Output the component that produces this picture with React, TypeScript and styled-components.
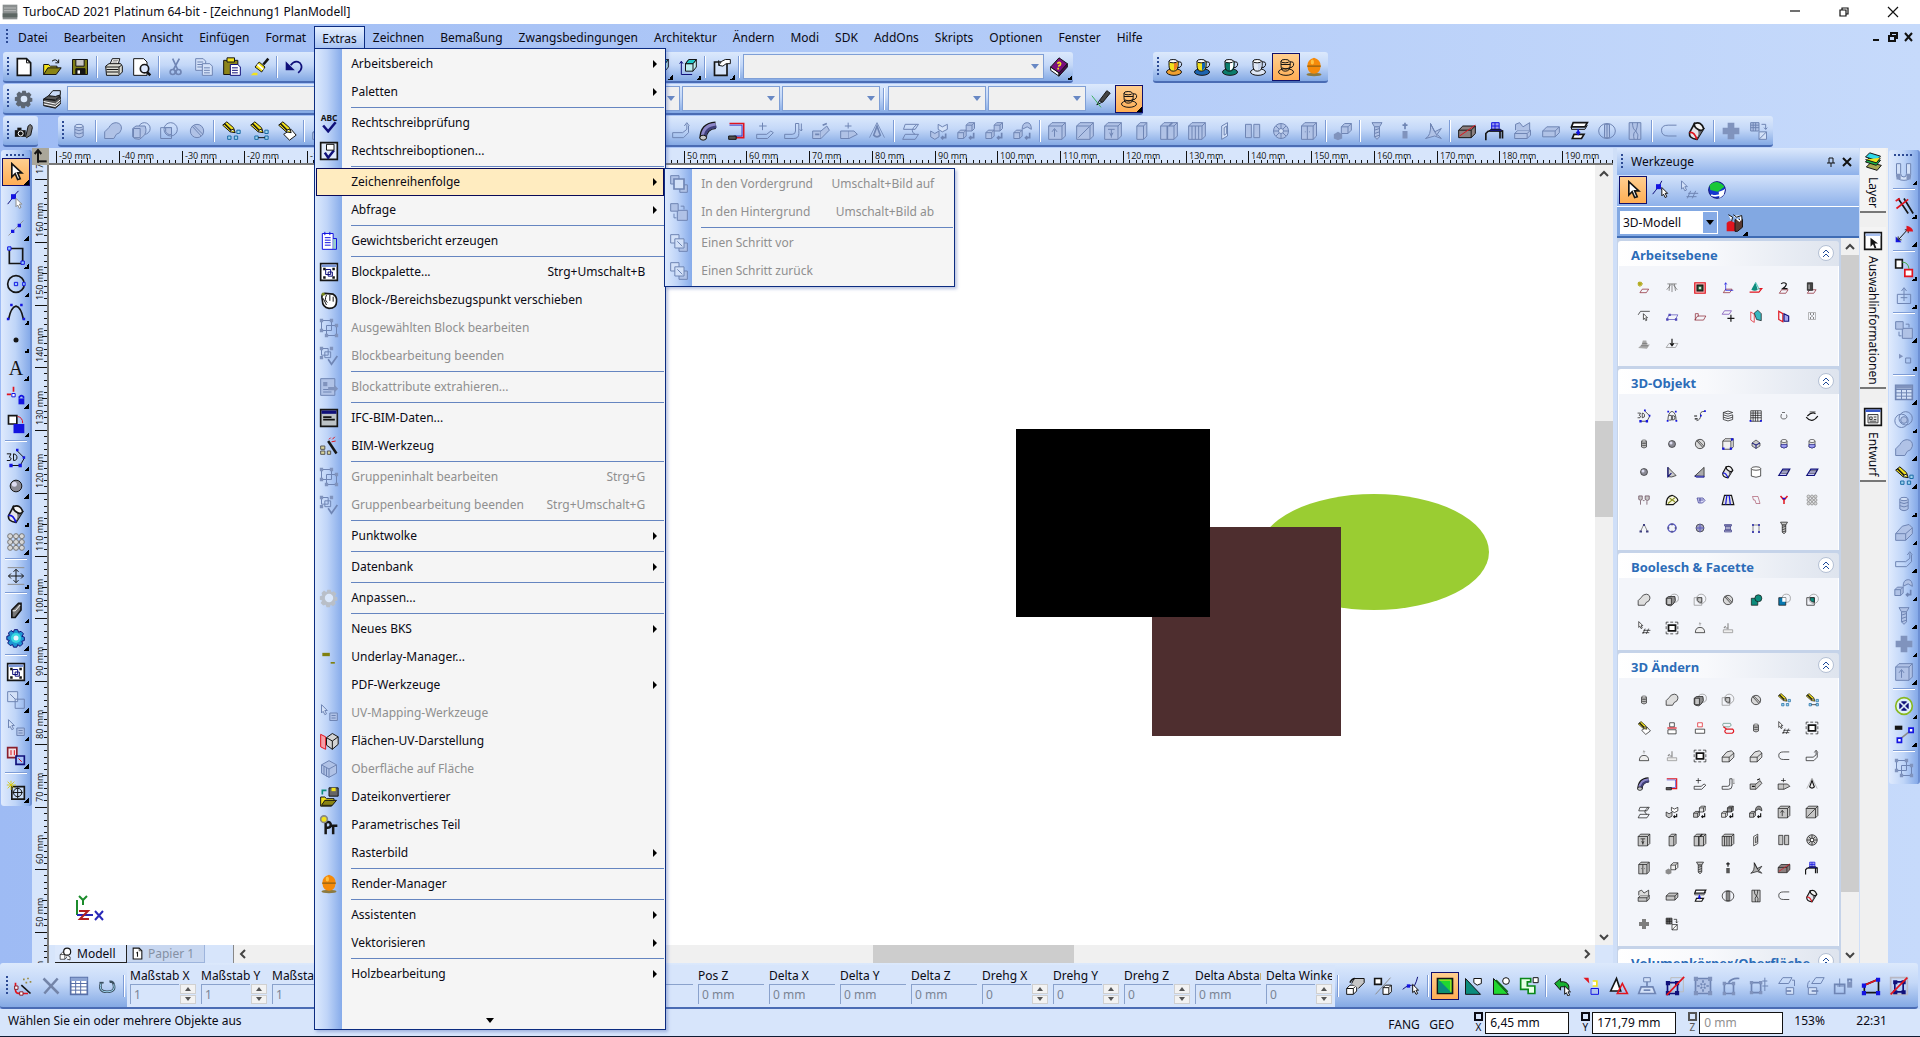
import React from 'react';
import styled, { createGlobalStyle, css } from 'styled-components';

/* ---------- icon drawings (24 x 24 grid) ---------- */

type Shape = [d: string, stroke?: string, fill?: string, width?: number];

const K = '#151515';
const G = '#c6c6c6';
const D = '#8c8c8c';
const W = '#ffffff';
const B = '#1414e0';
const N = '#10107a';
const R = '#e0141e';
const Y = '#f2e21c';
const T = '#0c8c7c';
const M = '#8a1f2c';

const c = (x: number, y: number, r: number) =>
  `M${x - r} ${y}a${r} ${r} 0 1 0 ${2 * r} 0a${r} ${r} 0 1 0 ${-2 * r} 0z`;
const e = (x: number, y: number, rx: number, ry: number) =>
  `M${x - rx} ${y}a${rx} ${ry} 0 1 0 ${2 * rx} 0a${rx} ${ry} 0 1 0 ${-2 * rx} 0z`;
const r = (x: number, y: number, w: number, h: number) => `M${x} ${y}h${w}v${h}h${-w}z`;
const box = (x: number, y: number, w: number, h: number, d: number, fill = G): Shape[] => [
  [`M${x} ${y + d}l${d} ${-d}h${w - d}v${h - d}l${-d} ${d}h${-(w - d)}z`, K, fill],
  [`M${x} ${y + d}h${w - d}v${h - d}M${x + w - d} ${y + d}l${d} ${-d}`, K],
];
const plane = (x: number, y: number, s = M): Shape => [`M${x} ${y}l4 -6h11l-4 6z`, s];

const pencil: Shape[] = [
  ['M2 5l5 -4l8 7l2 6l-6 -1z', K, Y],
  ['M4 3l9 9', K, '', 2],
  ['M11 13l2 -3l3 1', K, W],
];
const group = (s = K, f = ''): Shape[] => [
  [r(3, 3, 12, 12), s, f],
  [r(9, 9, 12, 12), s],
  [r(1, 1, 4, 4) + r(13, 1, 4, 4) + r(1, 13, 4, 4) + r(19, 7, 4, 4) + r(7, 19, 4, 4) + r(19, 19, 4, 4), '', s],
];
const cup = (a: string, b: string, saucer: string): Shape[] => [
  [e(12, 18, 9, 4), K, saucer],
  ['M6 5v5q0 7 5 7q6 0 6 -7V5z', K, a],
  ['M12 5h4v5q0 5 -4 6z', '', b],
  ['M17 6q5 -1 4 4q-1 3 -5 3', K],
  [e(11, 5, 5, 2), K, W],
];
const tilted = (band: string): Shape[] => [
  ['M9 3L3 14q-1 7 9 8l8 -13z', K, '#e4e4ea', 2],
  ['M20 9l-8 13q3 -7 1 -11z', '', '#6c6c74'],
  ['M9 3q8 -3 11 6q-2 4 -7 1q-5 -3 -4 -7z', K, '#f4f4f4', 2],
  ['M3 14q5 -2 9 8', band, '', 2],
];
const arrowHead: Shape = ['M7 2v16l4 -4l3 7l3 -1l-3 -7h5z', K, W, 2];
const smallArrow = (x: number, y: number, s = K): Shape => [`M${x} ${y}v10l2 -2l2 4l2 -1l-2 -4h3z`, s, W];
const gearPath =
  'M10 2h4l1 3l3 -1l3 3l-2 3l3 1v4l-3 1l1 3l-3 3l-3 -2l-1 3h-4l-1 -3l-3 1l-3 -3l2 -3l-3 -1v-4l3 -1l-1 -3l3 -3l3 2z';

const icons: Record<string, Shape[]> = {
  app: [[r(1, 1, 22, 22), '', '#8a8f8f'], [r(1, 14, 22, 6), '', '#5c6663'], ['M3 6h18M3 10h18', '#c4c4c4']],
  new: [['M4 2h11l5 5v15H4z', K, W, 2], ['M15 2v5h5', K]],
  open: [
    ['M2 9h6l2 2h8v3l-4 7H2z', K, Y],
    ['M2 21l5 -8h16l-6 8z', K, '#8a8414'],
    ['M12 5q5 -4 8 2M20 3v4h-4', K],
  ],
  save: [[r(3, 3, 18, 18), K, '#7d7d16'], [r(7, 3, 10, 8), K, G], [r(7, 14, 11, 7), K, K], [r(9, 16, 3, 4), '', W]],
  print: [
    ['M7 9l3 -7h9l-2 7z', K, W],
    ['M2 11l4 -3h14l2 3v7l-4 4H3z', K, '#dcdcd4'],
    ['M2 12h16l3 -2M18 12v9M3 15h14M3 18h14', K],
    ['M11 4h6M10 6h6', D],
  ],
  preview: [['M2 2h12l4 4v16H2z', K, W], [c(15, 14, 5), K, '#dfeaff', 2], ['M18 18l4 4', K, '', 3]],
  cut: [['M8 2l6 13M16 2L9 15', K, '', 2], [c(8, 18, 3) + c(15, 18, 3), K, '', 2]],
  copy: [
    ['M2 2h9l3 3v11H2z', K, W],
    ['M4 6h7M4 9h7M4 12h7', K],
    ['M10 8h9l3 3v11H10z', K, W],
    ['M12 13h7M12 16h7M12 19h7', K],
  ],
  paste: [
    [r(2, 4, 17, 17), K, '#8c8419'],
    [r(6, 1, 9, 5), K, Y],
    ['M10 9h9l3 3v10H10z', N, W],
    ['M12 13h7M12 16h7M12 19h7', N],
  ],
  brush: [
    ['M22 2l-6 7', K, '#8a5a2a', 3],
    ['M11 6l7 6l-4 6l-8 -6z', K, Y],
    ['M9 9l7 6', W, '', 2],
    ['M1 22h8v-3H4z', '', Y],
  ],
  undo: [['M2 5v11h11z', '', N], ['M8 10q5 -7 11 -3q5 6 -2 12', N, '', 2]],
  redo: [['M21 5v11h-11z', '', N], ['M17 11q-6 -8 -12 -3q-4 6 3 12', N, '', 2]],
  axesbox: [
    ['M9 8l4 -5h9v9l-4 5H9z', K, '#bfeef0'],
    ['M9 8h9v9M18 8l4 -5', K],
    ['M9 8l4 -5h9l-4 5z', K, '#22c8c8'],
    ['M4 6v15h13M2 8l2 -3l2 3', N],
  ],
  props: [['M3 6h15v16H3z', K, '#d6e4fa', 2], ['M8 10q3 -6 8 -7h6v5h-5l-4 3z', K, W], ['M8 4v6', K]],
  book: [
    ['M2 12v4l10 7v-4z', K, W],
    ['M12 19v4l10 -11V8z', K, '#4c064e'],
    ['M2 12L12 1l10 7l-10 11z', K, '#7a0e7e'],
    ['M10 8q3 -3 4 0q0 2 -3 3M11 13v2', Y, '', 2],
  ],
  cupYellow: cup(Y, '#f08020', '#f0a030'),
  cupBlue: cup(Y, '#1464b4', '#1c64b0'),
  cupGreen: cup('#0c7c6c', W, '#0c7c6c'),
  cupLine: cup('#e0e8f6', '#c8d4ea', '#dfe8f6'),
  cupActive: [
    [e(12, 18, 9, 4), K],
    ['M6 5v5q0 7 5 7q6 0 6 -7V5', K],
    ['M17 6q5 -1 4 4q-1 3 -5 3M6 9h11M7 13q5 3 9 0', K],
    [e(11, 5, 5, 2), K],
  ],
  egg: [
    [e(12, 21, 9, 2), '', '#8c7a40'],
    ['M12 1q8 2 8 10q-1 9 -8 9q-7 0 -8 -9q0 -8 8 -10z', '', '#f58a0a'],
    ['M4 11h16', '#a86a10', '', 2],
    [e(10, 6, 2, 3), '', '#ffc040'],
  ],
  gear: [[gearPath, '', '#5d6673'], [c(12, 12, 4), '', '#dbe8fb']],
  gearLight: [[gearPath, '', '#b9bfc8'], [c(12, 12, 5), '', '#dbe8fb']],
  gearCyan: [[gearPath, N, '#1e96d2'], [c(12, 12, 6), '', '#38d8e0'], [c(12, 12, 3), '', '#e6f4ff']],
  layers: [
    ['M2 12l6 -4h14l-6 5z', K, '#5a5a5a'],
    ['M2 12v8l14 3l6 -5v-9l-6 5z', K, '#5a5a5a'],
    ['M2 15l14 3l6 -5M2 18l14 3l6 -5', W],
    ['M8 8l5 -6h9v5l-6 2z', K, '#c8daf6'],
  ],
  pen: [['M10 14L19 2l4 3l-9 11z', K, '#444'], ['M10 14l-3 5l6 -3', K], ['M1 8l11 14', '#40b060']],
  camera: [
    [r(1, 11, 13, 8), '', K],
    [c(8, 15, 3), W],
    ['M14 19l3 -13q4 -4 5 2l-2 9l-5 3z', K, '#777'],
    [r(4, 8, 5, 3), '', K],
  ],
  barrel: [
    ['M7 6v12q5 4 10 0V6', K, G],
    [e(12, 6, 5, 2), K, W],
    ['M7 10q5 3 10 0M7 14q5 3 10 0', K],
  ],
  union: [['M2 13l5 -5q3 -6 9 -6q7 1 6 8q-1 5 -6 6l-3 5H2z', K, '#dedede']],
  subtract: [[c(16, 9, 7), D], ['M2 9l4 -3h11q3 8 -3 13l-4 3q-6 0 -8 -3z', K, D], [r(3, 9, 8, 11), K, G]],
  intersect: [[r(2, 8, 13, 13), D], [c(14, 10, 8), D], ['M8 8h7v8q-5 1 -7 -3z', K, G]],
  slash: [[c(12, 12, 8), K, '#d8d8d8'], ['M6 6l11 12M8 5l11 11', K]],
  pencilDots: [
    ...pencil,
    [r(8, 18, 4, 4) + r(19, 11, 4, 4) + r(16, 18, 4, 4), '#1a6aa4', '#9fd4ee'],
  ],
  pencilNodes: [...pencil, [r(7, 18, 4, 4) + r(19, 11, 4, 4) + r(19, 18, 4, 4), '#1a6aa4', '#9fd4ee'], ['M11 20h8', K]],
  pencilPlane: [['M8 16l9 -6l6 7l-8 6z', K, W], ...pencil],
  sweep: [['M2 14h12l5 -4v-6M2 14v6h13l6 -6v-8', K], ['M16 6l3 -4l3 4', K]],
  pipe: [
    ['M5 21q0 -15 15 -16', K, '', 9],
    ['M5 21q0 -15 15 -16', '#8c86c8', '', 6],
    ['M7 21q0 -13 14 -14', '#40407a', '', 3],
    [e(5, 20, 4, 3), K, G],
  ],
  ubend: [['M3 3h17v17H3', R, '', 2], ['M3 5h15v13H8', '#2828c8', '', 1], [r(2, 18, 9, 4), K, '#555']],
  plusArrow: [['M9 2v9M5 6h9', K], ['M2 16h12l5 -4l3 2l-7 7H2z', K]],
  bendPipe: [['M2 16h9q4 0 4 -4V3h4v12q0 6 -6 6H2z', K], ['M22 3v9l-2 -2M22 12l1 -2', D]],
  foldArrow: [['M2 12h10v9H2z', K, G], ['M12 12l7 -6l3 5l-10 10', K, G], ['M5 16h5M14 5l5 -2', K, '', 2]],
  foldPlus: [['M2 12h10v9H2z', K, G], ['M12 12h6l4 4l-10 5', K, G], ['M11 2v7M7 6h8', K]],
  cone: [['M12 6l-4 11q4 4 8 0z', K, '#eeeeee', 2], ['M12 2L3 20M12 2l9 18', D, '', 1]],
  sheets: [['M5 4h16l-4 6H3z', K], ['M5 16h16l-4 6H2z', K], ['M19 4q-10 8 -2 12', K]],
  flow1: [['M2 12l5 3l5 -3v7l-5 3l-5 -3z', K, G], ['M11 4l5 3l6 -3v6l-6 3l-5 -3z', K, W], ['M20 15v5h-5M17 18l-2 2l2 2', K, '', 2]],
  flow2: [...box(1, 11, 10, 10, 3), ...box(11, 2, 10, 10, 3, '#e6e6e6'), ['M20 14v6h-5M17 18l-2 2l2 2', K, '', 2]],
  flow3: [...box(1, 11, 10, 10, 3, '#e6e6e6'), ...box(11, 2, 10, 10, 3, D), ['M20 14v6h-5M17 18l-2 2l2 2', K, '', 2]],
  flow4: [...box(1, 11, 10, 10, 3), ['M11 10q0 -8 6 -8q5 0 5 8l-5 -3z', K, D], ['M20 14v6h-5M17 18l-2 2l2 2', K, '', 2]],
  boxUp: [...box(2, 2, 20, 20, 4), ['M9 19v-9M6 13l3 -4l3 4', K]],
  boxDiag: [...box(2, 2, 20, 20, 4), ['M4 20L17 7', K]],
  boxT: [...box(2, 2, 20, 20, 4), ['M6 10h8M10 10v10M8 14l2 4l2 -4', K]],
  boxSlim: box(7, 2, 12, 20, 4),
  boxSplit: [...box(2, 2, 20, 20, 4), ['M10 6v16M12 6l4 -4', K, '', 2]],
  boxSlats: [...box(2, 2, 20, 20, 4), ['M6 6v16M10 6v16M14 6v16', K]],
  panel: [['M8 6l7 -4v16l-7 4zM11 8l3 -2v9l-3 2z', K, W]],
  panels: [[r(3, 4, 7, 16) + r(13, 4, 7, 16), K, G]],
  wheel: [[c(12, 12, 9), K, G], ['M12 3v18M3 12h18M6 6l12 12M18 6L6 18', K], [c(12, 12, 3), K, W]],
  cabinet: [...box(3, 2, 18, 20, 4), ['M10 6v16M7 13h1M12 13h1', K]],
  steps: [...box(10, 3, 12, 12, 4, '#eee'), ['M1 16l5 -3l5 3v5l-5 2l-5 -2z', '', D]],
  screw: [['M6 2h12l-3 5H9z', K, G], ['M9 7h6v12l-3 3l-3 -3z', K, G], ['M9 11l6 -2M9 15l6 -2M9 19l6 -2', K]],
  pin: [['M12 2v8M9 5h6', K, '', 2], [r(9, 12, 6, 9), '', '#555']],
  sail: [['M3 21q7 -3 6 -18l5 10l8 -4l-5 7l5 5l-8 -3z', K, '#b0b0b0'], ['M9 3l8 15', K]],
  slabRed: [...box(2, 6, 20, 14, 5, '#8c8080'), ['M3 18L22 5', R]],
  tableBlue: [
    [r(8, 2, 9, 8), B, '#9c9cf0'],
    ['M12 2v8M8 6h9', B],
    ['M4 12h17v9M4 12l-3 3v8M18 12v9', K, '', 2],
    ['M5 12l2 -2h12l2 2z', K, B],
  ],
  notch: [...box(2, 11, 19, 10, 4), ['M3 11V4l5 -2l4 5l8 -5v9', K, '#dcdcdc']],
  slab: box(2, 7, 20, 12, 5),
  stack: [['M5 2h17l-3 5H3z', K, W, 2], ['M3 7v3h16l3 -5', K], ['M6 16h12l-3 5H4z', K, W, 2], ['M11 10v6M9 13l2 3l2 -3', B, '', 2]],
  circleSplit: [[e(12, 12, 10, 9), K], [r(9, 4, 6, 16), K, G], ['M12 4v16', K]],
  hourglass: [[r(5, 2, 14, 20), K, G], ['M9 2q0 8 4 10q-4 2 -2 10M15 2q0 6 -2 10q4 4 2 10', K]],
  cshape: [['M21 5H11q-8 0 -8 6q0 7 8 7h10', K]],
  tiltRed: tilted(R),
  tiltBlue: tilted(B),
  plus: [['M8 2h8v6h6v8h-6v6H8v-6H2V8h6z', '', '#7e7e7e']],
  hatch: [[r(2, 2, 10, 10), K, D], ['M2 5h10M2 8h10M5 2v10M8 2v10', K], [r(12, 13, 9, 9), K, W], ['M12 22l9 -9M15 4h5v6M18 8l2 2l2 -2', K]],
  arrow: [arrowHead],
  nodeArrow: [['M2 17Q6 12 9 8Q11 5 13 1M9 8Q14 12 16 15', N], [r(6, 5, 6, 6), '', B], smallArrow(13, 9)],
  nodeArrowDim: [['M2 17Q6 12 9 8Q11 5 15 1', N], [r(6, 5, 6, 6), '', B], smallArrow(12, 10, D)],
  planeArrow: [smallArrow(3, 1), ['M10 22l4 -9M16 22l4 -9M9 20h12M11 16h12', K]],
  ball: [[c(12, 12, 10), N, '#1438d0'], ['M3 6q9 -8 18 2l-8 6l-9 -2z', '', '#18c838'], ['M14 14q6 -1 8 -4l-2 8l-5 4z', '', W], ['M5 18q7 3 13 -2', W, '', 2]],
  line: [['M3 21L21 3', D, '', 1], [r(6, 14, 4, 4) + r(14, 7, 4, 4), '', B]],
  rect: [[r(4, 3, 16, 18), K, '', 2], [r(2, 1, 4, 4) + r(18, 18, 4, 4), B, '#9cf']],
  circle: [[c(12, 12, 10), K, '', 2], [r(10, 10, 4, 4) + r(20, 10, 3, 4), B, '#9cf']],
  arc: [['M3 21Q6 6 12 5Q18 6 21 21', K, '', 2], [r(5, 2, 3, 3) + r(17, 2, 3, 3) + r(1, 19, 3, 3) + r(20, 19, 3, 3), '', B]],
  dot: [[c(12, 12, 3), '', K]],
  letterA: [],
  coordLock: [['M9 1v6M1 10h5', R, '', 2], [r(7, 9, 4, 4), B, W], [r(15, 15, 7, 7), '', B], ['M16 15v-2q3 -3 5 0v2', B, '', 2]],
  copyBlue: [[r(3, 2, 10, 10), K, W, 2], [r(9, 12, 13, 11), '', B], ['M14 3q6 1 6 8', R]],
  poly3d: [['M13 3l9 9l-5 9H6', K], [r(12, 1, 3, 3) + r(20, 10, 3, 3) + r(4, 19, 4, 4) + r(15, 19, 4, 4), '', B], ['M1 7h5l-2 4q4 1 1 4H1M9 7v8q5 0 4 -5q-1 -3 -4 -3z', K]],
  sphere: [[c(12, 12, 7), K, '#8a8a94'], [c(10, 10, 3), '', '#dcdcf0']],
  balls: [[[5, 12, 19].map((x) => [5, 12, 19].map((y) => c(x, y, 3)).join('')).join(''), '#777', '#d8d8d8']],
  move: [['M2 2h20M2 22h20', D], ['M12 4v16M3 12h18M9 7l3 -3l3 3M9 17l3 3l3 -3M6 9l-3 3l3 3M18 9l3 3l-3 3', K]],
  slabDark: [['M7 12l8 -8h3v8l-7 9H7z', K, '#777', 2], ['M8 13h3l6 -7', W]],
  blockWin: [[r(2, 2, 20, 20), K, W, 2], [r(3, 3, 18, 3), '', '#7c98d8'], [r(8, 9, 6, 6) + r(11, 12, 5, 5), N], [r(5, 7, 3, 3) + r(16, 7, 3, 3) + r(5, 17, 3, 3) + r(16, 17, 3, 3), '', K]],
  blockSmall: [[r(2, 2, 12, 12), K, W], [r(11, 11, 11, 11), K], ['M5 5l6 6', K]],
  arrowBlock: [smallArrow(3, 2), [r(13, 12, 9, 9), K, G], ['M15 15h5M15 18h5', K]],
  redBlue: [[r(2, 2, 11, 12), M, '#f4e0e4', 2], [r(12, 12, 10, 10), N, '#a8c4f8', 2], ['M6 5v6M10 5v6M15 15l4 4', R]],
  starCircle: [[r(7, 8, 15, 15), K, '#c8dcf8', 2], [c(14, 15, 5), K], ['M14 9v13M8 15h12', K], ['M6 1v11M1 6h11M2 2l8 8M10 2l-8 8', '#d8c800', '', 1]],
  magnet: [['M3 2v13q0 7 9 7q8 0 8 -7V2h-5v12q0 4 -3 4q-4 0 -4 -4V2z', D, W], [r(3, 14, 5, 7) + r(15, 14, 5, 7), '', D]],
  parallel: [['M5 3l12 18M12 3l11 18', K, '', 2], ['M3 15L17 4M2 6l5 -3', R, '', 2]],
  redArrow: [['M2 15v7h7z', '', B], ['M6 18L16 7M13 7h4v4M5 15v4h4', K, W], ['M15 2v7h8q-1 -6 -8 -7z', '', R]],
  copyRed: [[r(2, 2, 8, 10), K, W, 2], ['M10 5q7 0 8 8', '#48a848'], [r(13, 14, 9, 8), R, W, 2]],
  boxOut: [[r(4, 10, 16, 11), K], ['M12 18V3M9 6l3 -4l3 4M8 14h8', K]],
  order: [[r(10, 10, 12, 12), K, D], [r(2, 2, 9, 9), K, D], ['M14 5h4v4M6 14v5h3', K]],
  orderFront: [[r(2, 2, 10, 10), K, D], [r(13, 13, 9, 9), K, D], [r(6, 6, 12, 12), K, W, 2]],
  orderStep: [[r(2, 2, 10, 10), K, W], [r(12, 12, 10, 10), K, D], [r(7, 7, 11, 11), K, W], ['M10 10l6 6', K]],
  dots: [['M6 7l5 3l-5 3z', '', K], [r(14, 12, 6, 6), D]],
  table: [[r(2, 4, 20, 17), K, W, 2], ['M2 9h20M2 13h20M2 17h20M9 9v12M15 9v12', K], [r(2, 4, 20, 4), '', D]],
  rings: [[c(9, 13, 8), D], [c(14, 10, 8), D], [c(12, 12, 4), K, G]],
  house: [['M2 14l8 -9l8 -2l4 4v7l-8 8H2z', K, '#dedede'], ['M2 14h12l8 -7M14 14v8', K]],
  target: [[c(12, 12, 10), '#88b820', '#dff0fa', 2], ['M9 7h6l-3 3zM9 17h6l-3 -3zM7 9v6l3 -3zM17 9v6l-3 -3z', N, N]],
  nodes: [['M6 19L20 8', D, '', 2], [r(4, 17, 5, 5) + r(18, 5, 5, 5), B, W, 2], [r(1, 2, 9, 5), '', K]],
  group: group(),
  groupCheck: [[r(3, 3, 8, 8) + r(7, 7, 7, 7), K], [r(1, 1, 4, 4) + r(13, 1, 4, 4) + r(1, 12, 4, 4), '', K], ['M11 16l4 6l7 -10', K, '', 2]],
  exportAttr: [[r(2, 2, 17, 20), K, '#dfeaff'], [r(5, 6, 5, 5), '', N], ['M5 15h10M5 18h10', K], ['M11 12h7v-3l5 5l-5 5v-3h-7z', '', '#6c84b8']],
  abc: [['M5 15l6 7L20 11', N, '', 3]],
  optCheck: [[r(2, 2, 20, 20), K, '#dfe9fa', 2], ['M7 14l4 6l7 -9', N, '', 3], [r(9, 4, 9, 7), K, W]],
  report: [[r(4, 3, 13, 19), B, W], ['M7 8h7M7 11h7M7 14h7M7 17h7', B], ['M17 9h4v13h-4', B, '#9cc'], ['M7 1v4M13 1v4', B]],
  hand: [['M4 12q-2 -7 3 -8l10 1q5 3 4 9q0 8 -9 8q-8 -1 -8 -10z', K, W, 2], ['M5 10l4 8M9 6q-3 6 1 9M13 6v7M17 8v6', K], [c(5, 5, 2), '', '#7a8a20']],
  window: [[r(2, 2, 20, 20), K, '#bdc3c7', 2], [r(3, 3, 18, 4), '', N], ['M5 11h10M5 14h14', K, '', 2]],
  wand: [['M11 6l10 15', K, '', 3], ['M12 4l2 -2M16 4l3 -3M15 7l5 -1', R], [r(2, 12, 5, 4) + r(2, 18, 5, 4) + r(10, 18, 4, 4), '#555', '#d8d49c']],
  underlay: [[r(4, 7, 9, 4), '', '#808010'], [r(14, 18, 5, 2), '', '#808010']],
  uvCube: [['M2 4l6 3v15l-6 -3z', R, '#f4a0a8'], ['M9 8l7 -5l7 4v9l-7 6l-7 -5z', K, '#d4d4d4'], ['M9 8l7 4v10M16 12l7 -5', K]],
  cube: [['M3 7l9 -5l9 5v10l-9 5l-9 -5z', K, '#cfdcf4'], ['M3 7l9 5v10M12 12l9 -5M6 9v10M9 11v10', K]],
  convert: [[r(12, 1, 11, 10), K, '#666'], [r(15, 1, 5, 4), '', Y], ['M2 12h5l2 2h9v3l-3 6H2z', K, Y], ['M3 22l4 -6h14l-5 6z', K, '#8a8414'], ['M4 9V4h5', T, '', 2]],
  param: [['M8 8v15M8 9q7 -2 6 4q-1 3 -6 2', K, '', 3], ['M13 13h9M17 13v10', K, '', 3], [c(6, 5, 4), '#888', Y, 2]],
  wireWand: [['M3 8v9q0 4 6 4h9', R, '', 2], ['M10 11l11 10', K, '', 2], [r(2, 12, 4, 4) + r(8, 19, 4, 4), M, W], ['M12 4h2M17 3h2M20 7h2M15 8h2', '#998a40', '', 2]],
  cross: [['M3 3l18 18M20 3L4 21', '#7384a8', '', 3]],
  sheet: [[r(2, 2, 20, 20), '#5870a8', W, 2], [r(2, 2, 20, 4), '', '#8ca4d4'], ['M2 9h20M2 13h20M2 17h20M8 6v16M14 6v16', '#5870a8']],
  refresh: [['M5 8q-4 11 7 11q11 0 8 -9q-1 -4 -5 -3', '#3c5060', '', 3], ['M5 8q-4 11 7 11q11 0 8 -9', '#9cd4f0'], ['M3 8h5', '#3c5060', '', 2]],
  boxPair: [...box(2, 11, 12, 11, 4, W), ['M8 9l3 -6h12v5l-7 7', K, G], ['M6 8q2 -5 6 -5', K, '', 2]],
  boxSwap: [[r(2, 3, 8, 7), K, W, 2], ['M3 22L21 2', D], ...box(12, 11, 10, 11, 3, W)],
  curveNode: [['M2 16Q10 9 16 12Q19 6 20 1', N], [r(7, 10, 4, 4), '', B], smallArrow(14, 10)],
  tileGreen: [[r(3, 3, 18, 18), K, '#20d830', 2], ['M4 4v16h16z', '', T], ['M5 5h14v14', Y, '', 1]],
  tri1: [['M3 3v19h18z', K, T], ['M13 3h9v6l-5 2l-4 -3z', K, W]],
  tri2: [['M3 3v19h18z', K, '#20d830'], ['M6 5l14 14', '#0a6a10', '', 2], [c(18, 6, 4), K, W]],
  tri3: [['M2 3h12v4h-4v5h9v9h-8v-5H2z', '#0a8818', '#e6ffe6', 2], [r(17, 2, 6, 6), K, W]],
  undoArrow: [['M2 9l7 -6v4q8 -1 10 5v5q-3 -5 -10 -4v4z', K, '#18b030'], smallArrow(14, 12)],
  bits: [['M3 2h6l1 7z', '', R], ['M14 6h5v6h-5', Y, W, 2], [r(12, 15, 9, 7), B, '#b0c4f0']],
  cones: [['M2 18l7 -15l5 15z', K, W, 2], ['M10 21l6 -12l6 12z', R, '', 2]],
  press: [[r(8, 2, 8, 5), K, W], ['M12 7v6', K, '', 2], ['M2 21l3 -8h14l3 8z', K, W, 2], ['M8 17h8', K, '', 2]],
  selRed: [[r(7, 2, 15, 17), '#bbb'], [r(3, 8, 12, 13), N, '', 2], [r(1, 6, 5, 5) + r(12, 6, 5, 5) + r(1, 18, 5, 5) + r(12, 18, 5, 5), '', N], ['M2 23L23 1', R, '', 2]],
  frameGrid: [[r(3, 3, 18, 18), K, '#dfe8fb', 2], [r(1, 1, 5, 5) + r(18, 1, 5, 5) + r(1, 18, 5, 5) + r(18, 18, 5, 5), '', K], ['M9 9l2 2M13 13l2 2M15 9l-2 2M11 13l-2 2M12 5v3M12 16v3M5 12h3M16 12h3', K, '', 2]],
  nodeCurve: [[r(4, 9, 11, 12), K, '', 2], [r(2, 7, 4, 4) + r(13, 7, 4, 4) + r(2, 19, 4, 4) + r(13, 19, 4, 4), '', K], ['M9 8q4 -6 13 -5', D, '', 2]],
  nodeMove: [[r(3, 8, 11, 12), K, '', 2], [r(1, 6, 4, 4) + r(12, 6, 4, 4) + r(1, 18, 4, 4) + r(12, 18, 4, 4), '', K], ['M19 2v16M16 12h7M16 6h6', D]],
  planeDown: [['M2 9l5 -7h11l-4 7z', K], ['M18 5h3v7', K], [r(11, 14, 9, 8), K, W], ['M11 18h6', K, '', 2]],
  planeUp: [['M8 9l5 -7h10l-4 7z', K], ['M6 6q-3 0 -3 8', K], [r(4, 14, 10, 8), K, W], ['M8 18h8', K, '', 2]],
  lockBox: [[r(2, 10, 12, 11), K, '', 2], ['M8 3v10M5 12h8', K], [r(17, 7, 6, 7), '', '#556'], ['M18 7V4h4v3', K, '', 2]],
  polyBlue: [['M4 20h17V4L4 11z', K, '', 2], ['M4 11L21 4', R, '', 2], [r(1, 9, 5, 5) + r(18, 2, 5, 5) + r(1, 18, 5, 5) + r(18, 18, 5, 5), '', B]],
  crossOut: [[r(2, 2, 20, 20), '#b8b8c4', '', 2], [r(7, 7, 10, 12), N, '', 2], [r(5, 5, 5, 5) + r(15, 5, 5, 5) + r(5, 17, 5, 5) + r(15, 17, 5, 5), '', N], ['M2 22L22 2', R, '', 2]],
  figures: [['M2 12q4 -5 10 0v10H2z', '', R], ['M12 8h9v9l-6 5h-3z', K, '#5a3a32'], ['M4 2l5 3l-1 5', K, W], ['M11 4h8v5M14 7l4 3', W, '', 2], ['M10 2l4 3l6 -2l1 9', K]],
  layerTab: [['M4 18l13 4l5 -6l-13 -3z', K, '#a8a850'], ['M3 12l13 4l5 -6l-13 -4z', K, '#18b848'], ['M3 6l13 4l5 -5l-13 -4z', K, '#30d8e8'], ['M3 9l13 4l5 -6', K, Y]],
  selectTab: [[r(2, 2, 20, 20), K, W, 2], [r(3, 3, 18, 3), '', '#a8c0f0'], ['M9 8v11l3 -3l2 5l2 -1l-2 -5h4z', '', K]],
  designTab: [[r(2, 2, 20, 20), K, W, 2], [r(3, 3, 18, 3), '', '#3858c8'], ['M6 9h12v10H6zM8 12h3v3H8zM13 12h3M13 15h3M8 17h8', '#444', '#e8e8e8']],
  modelTab: [...box(2, 9, 12, 12, 4, W), [c(14, 8, 6), K, W, 2], ['M14 14l5 3v5l-5 -1', K, W]],
  paperTab: [['M4 2h11l5 5v15H4z', K, W, 2], ['M15 2v5h5', K], ['M10 11l2 -1v8', K, '', 2]],
  origin: [['M9 22V4M4 9l5 -6l5 6', K, '', 3], ['M9 20h13', K, '', 3]],
  wpStar: [['M5 1v9M1 5h9M2 2l6 6M8 2l-6 6', '#b0a818', '', 2], plane(5, 20)],
  wpRays: [['M4 5h16M12 5v14M10 6L3 15M14 6l7 9M8 5l-1 12M16 5l2 12', '#666']],
  wpTarget: [[r(3, 3, 18, 18), R, '#f4b0b0', 2], [r(7, 7, 10, 10), K, '#245c38', 2], [r(10, 10, 4, 4), '', '#c8e0d0']],
  wpAxes: [plane(4, 20), ['M8 3v13h13M6 6l2 -3l2 3', B]],
  wpCone: [['M11 2l-7 13q6 3 11 0z', '', T], ['M1 19h16l5 -6h-6', R, '', 2], ['M11 2l7 13', '#5cc8c0', '', 2]],
  wpTwo: [plane(4, 21), ['M7 5q5 -4 9 0q0 4 -6 8h8', K, '', 2]],
  wpBuild: [plane(4, 21), [r(4, 3, 9, 13), K, '#444'], ['M7 6v8', W]],
  wpPick: [['M2 10l4 -6h16', K], smallArrow(11, 8)],
  wpNodes: [['M3 18l4 -8h15l-4 8z', '#5048b8'], [r(2, 16, 4, 4) + r(17, 16, 4, 4) + r(6, 8, 4, 4), '', '#5048b8']],
  wpFace: [['M3 19l5 -7h14l-4 7zM4 19V8h5v5', M]],
  wpMove: [['M2 9l4 -6h12l-4 6z', '#7040b0'], ['M17 10v12M11 16h12', K, '', 2]],
  wpBox: [['M3 5l6 4v14l-6 -4z', R], ['M9 7l6 -5l6 6v12l-8 -2z', K, '#38b8c0']],
  wpBox2: [['M3 4l7 4v14l-7 -4z', R, '', 2], ['M12 8l8 4v9h-8z', N, '#a8a8f0', 2]],
  wpDots: [[r(5, 5, 14, 14), D], ['M8 8h2M14 8h2M11 12h2M8 16h2M14 16h2', K, '', 2]],
  wpGray: [['M2 19l6 -6l2 -7h6l1 7h5l-5 7z', '', '#a8a8a8'], ['M9 11h9M7 15h12', '#707070']],
  wpDown: [['M2 18l5 -7h15l-4 7z', D], ['M12 3v11M9 11l3 4l3 -4', K, '', 2]],
  spiral: [['M4 6q8 -5 16 0q-8 5 -16 0v4q8 5 16 0M4 10v4q8 5 16 0v-4M4 14v4q8 5 16 0v-4', K]],
  mesh: [[r(3, 3, 18, 18), K], ['M3 7h18M3 11h18M3 15h18M7 3v18M11 3v18M15 3v18', K], [r(1, 19, 3, 3) + r(19, 19, 3, 3), '', B]],
  loop: [['M7 8q-4 10 5 10q8 -1 5 -9M8 5h6', K]],
  arc3: [['M2 14q10 12 20 -2M4 12q8 -8 14 -4', K, '', 2], ['M8 5h10', K]],
  bell: [['M5 20q0 -14 7 -16q7 2 7 16', K], ['M7 11h4v8H7M13 11v8q4 0 4 -4q0 -4 -4 -4z', K], [r(4, 3, 3, 3) + r(17, 3, 3, 3) + r(3, 19, 3, 3) + r(18, 19, 3, 3), '', B]],
  hook: [['M20 4q-9 0 -7 7q0 8 -7 9', K], [r(19, 2, 3, 3) + r(12, 10, 3, 3), '', B], ['M2 12h5M3 17h5', K, '', 2]],
  cubeBlue: [...box(3, 3, 18, 18, 4, '#f0f0f0'), [r(17, 2, 4, 4) + r(2, 18, 4, 4) + r(15, 18, 4, 4), '', B]],
  gem: [['M4 10l8 -6l8 6v6l-8 5l-8 -5z', K, '#ccc'], ['M4 10l8 4l8 -4M12 14v7', N, '', 2]],
  drum: [['M6 6v12q6 4 12 0V6', K, '#ddd'], [e(12, 6, 6, 3), K, W], ['M6 13h12v5q-6 4 -12 0z', N, '#9c9cf0']],
  wedge: [['M5 4l14 14q-8 4 -14 2z', K, '#ccc'], ['M5 4v16l6 -6', N, '', 2]],
  pyramid: [['M3 19L19 4v16z', K, '#aaa'], ['M3 19h16v2H6z', N, '#88f']],
  can: [['M4 6v13q8 4 16 0V6', K, W], [e(12, 6, 8, 3), K, W]],
  sheetBlue: [['M3 18l7 -11h12l-6 11z', N, '#c8c8f8', 2], ['M7 14h12M9 10h12', K]],
  cups: [['M3 5h6v6q-3 3 -6 0zM6 13v7M14 5h7v6q-3 4 -7 0zM17 14v6M10 13h3', '#604050', G]],
  arch: [['M2 20q0 -14 10 -16q10 4 10 9l-8 7z', K, '#f8f8e0', 2], ['M5 18l12 -10M8 9l9 6', '#889020', '', 2]],
  tray: [['M6 8h12l4 5l-5 5H9z', N, '#dcdcf8'], ['M9 12h10M12 8v9', N]],
  lamp: [['M6 4h12l4 16H2z', K, '#ddd', 2], ['M10 4l-2 16M14 4l2 16', B, '', 2]],
  ribbon: [['M5 5h11l4 14h-8l-2 -7h-3z', '#a04058']],
  fork: [['M5 4l7 8l7 -8M12 12v8', R, '', 3], ['M9 9h6', B, '', 3]],
  branch: [['M12 4l-7 15M12 4l7 15', D, '', 2], [r(10, 4, 4, 4) + r(3, 17, 5, 4) + r(16, 17, 5, 4), '', '#404080']],
  ring: [[c(12, 12, 8), '#5a5ac0', '', 3], ['M12 3v4M12 17v4M3 12h4M17 12h4', K]],
  globe: [[c(12, 12, 8), K, '#a0a0c0'], ['M12 4v16M4 12h16', '#5a5ac0', '', 2]],
  chair: [['M5 5h14v3H5zM7 8h10v8H7zM5 16h14v4H5z', '#303080', '#a8a8c8']],
  bracket: [['M6 20V6h12v14', D, '', 2], [r(4, 4, 4, 4) + r(16, 4, 4, 4) + r(4, 18, 4, 4) + r(16, 18, 4, 4), '', '#4a4ab0']],
  solidUnion: [[r(4, 9, 11, 12), K, T], [c(16, 9, 6), K, T]],
  solidSub: [[c(16, 9, 7), D], [r(3, 8, 12, 13), K, '#0878b0'], [r(9, 8, 6, 7), '', W]],
  solidInt: [[r(3, 8, 13, 13), K], [c(15, 10, 8), D], ['M9 8h7v8q-5 0 -7 -4z', K, T]],
  dashBox: [[r(6, 7, 12, 10), K, W, 3], ['M2 2h4M9 2h5M17 2h5v4M22 9v5M22 17v5h-4M14 22H9M6 22H2v-4M2 14V9M2 6V2', K]],
  dome: [['M4 20q0 -9 8 -9q8 0 8 9z', K, '#eee'], ['M12 3v5M10 5l2 -2l2 2', D]],
  domeLeft: [['M4 15h16v5H4z', D, '#eee'], ['M12 4v10M5 12l3 -3M8 12h4', D, '', 2]],
  split: [[r(8, 3, 8, 7) + r(5, 15, 14, 7), K, W], ['M4 12h16', R, '', 2]],
  splitRed: [[r(8, 3, 8, 7), R, W], [r(4, 14, 16, 7), K, W]],
  slotRed: [['M4 4h12q4 4 -2 6H5q-4 -3 -1 -6z', '#508878'], ['M9 14h11q4 4 -1 7H9q-5 -3 0 -7zM4 10l6 4', R, '', 2]],
};

type Tone = 'plain' | 'dim';

const Svg = styled.svg`
  display: block;
  flex: none;
`;

function Icon({ name, size = 22, tone = 'plain' }: { name: string; size?: number; tone?: Tone }) {
  const dim = tone === 'dim';
  return (
    <Svg width={size} height={size} viewBox="0 0 24 24" aria-hidden="true">
      {(icons[name] || []).map(([d, s, f, w], i) => (
        <path
          key={i}
          d={d}
          stroke={s ? (dim ? '#6f85b4' : s) : 'none'}
          fill={f ? (dim ? (f === W ? '#d3e1f8' : s ? '#b0c2e6' : '#8093bd') : f) : 'none'}
          strokeWidth={w || 1.2}
        />
      ))}
      {name === 'letterA' && (
        <text x="12" y="20" textAnchor="middle" fontFamily="Liberation Serif, serif" fontSize="24" fill={K}>
          A
        </text>
      )}
      {name === 'abc' && (
        <text x="12" y="9" textAnchor="middle" fontFamily="Noto Sans, sans-serif" fontWeight="700" fontSize="10" fill={K}>
          ABC
        </text>
      )}
    </Svg>
  );
}

/* ---------- shared styles ---------- */

const Global = createGlobalStyle`
  *, *::before, *::after { box-sizing: border-box; }
  body {
    margin: 0;
    overflow: hidden;
    font-family: "Noto Sans", "Open Sans", sans-serif;
    font-size: 12px;
    line-height: 16px;
    color: #0a0a14;
  }
  button, input, select { font: inherit; color: inherit; margin: 0; padding: 0; }
`;

const barFill = css`
  background: linear-gradient(#dce9fc, #c4d8f8 45%, #84a9e4);
`;
const sideFill = css`
  background: linear-gradient(to right, #dfeafd, #bfd5f8 50%, #84a9e8);
`;

const Page = styled.div`
  display: flex;
  flex-direction: column;
  height: 100vh;
  background: linear-gradient(to right, #9ebbf4, #c6dafb);
  border-bottom: 1px solid #101c34;
`;

const TitleBar = styled.header`
  display: flex;
  align-items: center;
  height: 24px;
  flex: none;
  padding: 0 15px 0 2px;
  gap: 5px;
  background: #fff;
`;
const Title = styled.h1`
  flex: 1;
  margin: 0;
  font-size: 12px;
  font-weight: 400;
`;
const WindowButtons = styled.div<{ $gap: number }>`
  display: flex;
  gap: ${(p) => p.$gap}px;
`;
const PlainButton = styled.button`
  display: flex;
  align-items: center;
  justify-content: center;
  border: 0;
  background: none;
`;

const MenuBar = styled.nav`
  display: flex;
  flex: none;
  align-items: center;
  height: 28px;
  padding: 0 6px 2px;
`;
const Grip = styled.span`
  width: 2px;
  height: 16px;
  margin: 0 2px 0 0;
  flex: none;
  background: repeating-linear-gradient(#2c4a94 0 2px, transparent 2px 4px);
`;
const MenuSlot = styled.div`
  position: relative;
`;
const MenuTitle = styled.button<{ $open?: boolean }>`
  display: block;
  height: 22px;
  padding: 2px 7px 0;
  border: 1px solid transparent;
  background: none;
  white-space: nowrap;
  ${(p) =>
    p.$open &&
    css`
      border-color: #0c2c80;
      border-bottom: 0;
      background: linear-gradient(#e6f0fe, #a9c5f4);
    `}
`;
const Spacer = styled.span`
  flex: 1;
`;

/* ---------- menus ---------- */

const Popup = styled.div<{ $sub?: boolean }>`
  position: absolute;
  z-index: 10;
  top: ${(p) => (p.$sub ? '0' : '100%')};
  left: ${(p) => (p.$sub ? '100%' : '0')};
  width: ${(p) => (p.$sub ? 291 : 352)}px;
  padding: 1px;
  border: 1px solid #0c2c80;
  background: linear-gradient(to right, #dce9fd, #c0d5f8 12px, #86abea 27px, #f5f5f5 27px);
  box-shadow: 2px 2px 3px rgba(60, 90, 170, 0.35);
`;
const Entry = styled.button<{ $off?: boolean; $hot?: boolean }>`
  display: flex;
  align-items: center;
  width: 100%;
  height: 28px;
  padding: 0 18px 0 0;
  border: 1px solid ${(p) => (p.$hot ? '#0a0a58' : 'transparent')};
  background: ${(p) => (p.$hot ? '#ffecc0' : 'none')};
  color: ${(p) => (p.$off ? '#8f8f8f' : '#0a0a14')};
  text-align: left;
  white-space: nowrap;
`;
const EntrySlot = styled.div`
  position: relative;
`;
const EntryIcon = styled.span`
  width: 26px;
  margin-right: 8px;
  padding-left: 2px;
`;
const EntryText = styled.span`
  flex: 1;
`;
const Rule = styled.hr`
  height: 1px;
  margin: 1px 0 1px 35px;
  border: 0;
  background: #6585c0;
`;
const Caret = styled.span`
  margin-right: -12px;
  border: 4px solid transparent;
  border-left: 4px solid #000;
  border-right: 0;
`;
const MoreButton = styled(PlainButton)`
  align-items: flex-end;
  width: 100%;
  height: 40px;
  padding-bottom: 5px;
`;
const DownMark = styled.span<{ $color?: string }>`
  border: 4px solid transparent;
  border-top: 5px solid ${(p) => p.$color || '#000'};
  border-bottom: 0;
`;
const UpMark = styled.span<{ $color?: string }>`
  border: 3px solid transparent;
  border-bottom: 4px solid ${(p) => p.$color || '#000'};
  border-top: 0;
`;
const LowMark = styled.span`
  border: 3px solid transparent;
  border-top: 4px solid #555;
  border-bottom: 0;
`;

type Item = { t: string; i?: string; k?: string; off?: boolean; sub?: boolean; hot?: boolean };

const extras: (Item | null)[] = [
  { t: 'Arbeitsbereich', sub: true },
  { t: 'Paletten', sub: true },
  null,
  { t: 'Rechtschreibprüfung', i: 'abc' },
  { t: 'Rechtschreiboptionen...', i: 'optCheck' },
  null,
  { t: 'Zeichenreihenfolge', sub: true, hot: true },
  { t: 'Abfrage', sub: true },
  null,
  { t: 'Gewichtsbericht erzeugen', i: 'report' },
  null,
  { t: 'Blockpalette...', i: 'blockWin', k: 'Strg+Umschalt+B' },
  { t: 'Block-/Bereichsbezugspunkt verschieben', i: 'hand' },
  { t: 'Ausgewählten Block bearbeiten', i: 'group', off: true },
  { t: 'Blockbearbeitung beenden', i: 'groupCheck', off: true },
  null,
  { t: 'Blockattribute extrahieren...', i: 'exportAttr', off: true },
  null,
  { t: 'IFC-BIM-Daten...', i: 'window' },
  { t: 'BIM-Werkzeug', i: 'wand' },
  null,
  { t: 'Gruppeninhalt bearbeiten', i: 'group', k: 'Strg+G', off: true },
  { t: 'Gruppenbearbeitung beenden', i: 'groupCheck', k: 'Strg+Umschalt+G', off: true },
  null,
  { t: 'Punktwolke', sub: true },
  null,
  { t: 'Datenbank', sub: true },
  null,
  { t: 'Anpassen...', i: 'gearLight' },
  null,
  { t: 'Neues BKS', sub: true },
  { t: 'Underlay-Manager...', i: 'underlay' },
  { t: 'PDF-Werkzeuge', sub: true },
  { t: 'UV-Mapping-Werkzeuge', i: 'arrowBlock', off: true },
  { t: 'Flächen-UV-Darstellung', i: 'uvCube' },
  { t: 'Oberfläche auf Fläche', i: 'cube', off: true },
  { t: 'Dateikonvertierer', i: 'convert' },
  { t: 'Parametrisches Teil', i: 'param' },
  { t: 'Rasterbild', sub: true },
  null,
  { t: 'Render-Manager', i: 'egg' },
  null,
  { t: 'Assistenten', sub: true },
  { t: 'Vektorisieren', sub: true },
  null,
  { t: 'Holzbearbeitung', sub: true },
];

const orderMenu: (Item | null)[] = [
  { t: 'In den Vordergrund', i: 'orderFront', k: 'Umschalt+Bild auf', off: true },
  { t: 'In den Hintergrund', i: 'order', k: 'Umschalt+Bild ab', off: true },
  null,
  { t: 'Einen Schritt vor', i: 'orderStep', off: true },
  { t: 'Einen Schritt zurück', i: 'orderStep', off: true },
];

function Entries({ items }: { items: (Item | null)[] }) {
  return (
    <>
      {items.map((it, n) =>
        it ? (
          <EntrySlot key={n}>
            <Entry $off={it.off} $hot={it.hot}>
              <EntryIcon>{it.i && <Icon name={it.i} size={20} tone={it.off ? 'dim' : 'plain'} />}</EntryIcon>
              <EntryText>{it.t}</EntryText>
              {it.k && <span>{it.k}</span>}
              {it.sub && <Caret />}
            </Entry>
            {it.hot && (
              <Popup $sub>
                <Entries items={orderMenu} />
              </Popup>
            )}
          </EntrySlot>
        ) : (
          <Rule key={n} />
        ),
      )}
    </>
  );
}

/* ---------- toolbars ---------- */

const BarRow = styled.div`
  display: flex;
  flex: none;
  height: 32px;
  padding-left: 3px;
`;
const Bar = styled.div<{ $after?: number }>`
  display: flex;
  align-items: center;
  height: 31px;
  padding-left: 4px;
  margin-right: ${(p) => p.$after || 0}px;
  border-bottom: 2px solid #4a6cb4;
  border-radius: 3px;
  ${barFill}
`;
const BarGrip = styled(Grip)`
  height: 20px;
  margin-right: 1px;
`;
const ToolButton = styled.button<{ $on?: boolean; $corner?: boolean }>`
  display: flex;
  align-items: center;
  justify-content: center;
  flex: none;
  width: 28px;
  height: 28px;
  border: 1px solid ${(p) => (p.$on ? '#10106c' : 'transparent')};
  background:
    linear-gradient(135deg, transparent 50%, ${(p) => (p.$corner ? '#000' : 'transparent')} 50%) right bottom / 5px 5px no-repeat,
    ${(p) => (p.$on ? 'linear-gradient(#ffcf90, #ffae54)' : 'none')};
`;
const Divider = styled.span<{ $flat?: boolean }>`
  flex: none;
  ${(p) =>
    p.$flat
      ? css`
          width: 22px;
          height: 6px;
          background: linear-gradient(#7d9cd6, #7d9cd6) center 2px / 100% 1px no-repeat, linear-gradient(#fff, #fff) center 3px / 100% 1px no-repeat;
        `
      : css`
          width: 6px;
          height: 22px;
          background: linear-gradient(#7d9cd6, #7d9cd6) 2px 0 / 1px 100% no-repeat, linear-gradient(#fff, #fff) 3px 0 / 1px 100% no-repeat;
        `}
`;

/* Token syntax: "|" divider, "~" dimmed, "*" active, "^" corner mark. */
function Tools({ list, flat, size = 20 }: { list: string; flat?: boolean; size?: number }) {
  return (
    <>
      {list.split(' ').map((tok, n) => {
        if (tok === '|') return <Divider key={n} $flat={flat} />;
        const name = tok.replace(/[~*^]/g, '');
        return (
          <ToolButton key={n} aria-label={name} $on={tok.includes('*')} $corner={tok.includes('^')}>
            <Icon name={name} size={size} tone={tok.includes('~') ? 'dim' : 'plain'} />
          </ToolButton>
        );
      })}
    </>
  );
}

const ComboBox = styled.span<{ $w: number }>`
  display: flex;
  align-items: center;
  width: ${(p) => p.$w}px;
  height: 25px;
  margin: 0 1px;
  padding-right: 4px;
  border: 1px solid #7f9fd6;
  background: #f0f0f0;
`;
const ComboSelect = styled.select`
  flex: 1;
  min-width: 0;
  height: 100%;
  border: 0;
  background: none;
  appearance: none;
`;
function Combo({ w, label }: { w: number; label: string }) {
  return (
    <ComboBox $w={w}>
      <ComboSelect aria-label={label} disabled />
      <DownMark $color="#6888c4" />
    </ComboBox>
  );
}

/* ---------- work area ---------- */

const Work = styled.main`
  display: flex;
  flex: 1;
  min-height: 0;
`;
const SideDock = styled.div`
  width: 32px;
  flex: none;
  padding: 2px 0 0 1px;
`;
const SideBar = styled.div`
  display: flex;
  flex-direction: column;
  align-items: center;
  padding: 4px 0 2px;
  border-right: 2px solid #6d90d4;
  border-radius: 3px;
  ${sideFill}
`;
const SideGrip = styled.span`
  width: 20px;
  height: 2px;
  margin-bottom: 2px;
  background: repeating-linear-gradient(to right, #2c4a94 0 2px, transparent 2px 4px);
`;
const Drawing = styled.section`
  display: grid;
  flex: 1;
  min-width: 0;
  grid-template-columns: 17px minmax(0, 1fr) 18px;
  grid-template-rows: 17px minmax(0, 1fr) 18px;
  background: #d7e5fb;
`;
const Corner = styled.div`
  overflow: hidden;
  background: #aaa79a;
`;
const RulerTop = styled.div`
  grid-column: 2 / 4;
  overflow: hidden;
  border-bottom: 2px solid #7a7a7a;
`;
const RulerLeft = styled.div`
  grid-row: 2 / 4;
  overflow: hidden;
  border-right: 2px solid #7a7a7a;
`;
const FullSvg = styled.svg`
  display: block;
  width: 100%;
  height: 100%;
`;
const Canvas = styled.div`
  overflow: hidden;
  background: #fff;
`;
const ScrollV = styled.div`
  display: flex;
  flex-direction: column;
  align-items: center;
  width: 18px;
  background: #f0f0f0;
`;
const ScrollButton = styled(PlainButton)`
  width: 17px;
  height: 17px;
  flex: none;
`;
const Thumb = styled.span<{ $size: number }>`
  flex: ${(p) => p.$size} 0 0;
  align-self: stretch;
  background: #cdcdcd;
`;
const Track = styled.span<{ $size: number }>`
  flex: ${(p) => p.$size} 0 0;
`;
const BottomStrip = styled.div`
  display: flex;
  align-items: stretch;
  padding-left: 6px;
`;
const SheetTab = styled.button<{ $on?: boolean }>`
  display: flex;
  align-items: center;
  gap: 4px;
  width: ${(p) => (p.$on ? 72 : 78)}px;
  padding-left: 4px;
  border: 0;
  border-right: 1px solid ${(p) => (p.$on ? '#222' : '#9db4dc')};
  border-bottom: 1px solid ${(p) => (p.$on ? '#222' : '#9db4dc')};
  background: ${(p) => (p.$on ? '#dce8fc' : '#c8d7f0')};
  color: ${(p) => (p.$on ? '#0a0a14' : '#8590a4')};
`;
const ScrollH = styled.div`
  display: flex;
  flex: 1;
  align-items: center;
  margin-left: 28px;
  border-left: 1px solid #888;
  background: #f0f0f0;
`;

const Chevron = ({ d, s = '#444', w = 2 }: { d: string; s?: string; w?: number }) => (
  <Svg width="10" height="10" viewBox="0 0 10 10" aria-hidden="true">
    <path d={d} fill="none" stroke={s} strokeWidth={w} />
  </Svg>
);

const STEP = 62.75;
const RulerText = styled.text`
  font-family: "Open Sans", sans-serif;
  font-size: 9px;
  fill: #111;
`;
function TopRuler() {
  const marks = Array.from({ length: 25 }, (_, n) => n);
  return (
    <FullSvg>
      {marks.map((n) => {
        const x = Math.round(7 + n * STEP);
        return (
          <g key={n}>
            <path d={`M${x + 0.5} 3V15`} stroke="#111" />
            {Array.from({ length: 9 }, (_, m) => (
              <path key={m} d={`M${Math.round(x + ((m + 1) * STEP) / 10) + 0.5} ${m === 4 ? 10 : 12}V15`} stroke="#111" />
            ))}
            <RulerText x={x + 3} y="11">
              {-50 + n * 10} mm
            </RulerText>
          </g>
        );
      })}
    </FullSvg>
  );
}
function LeftRuler() {
  const marks = Array.from({ length: 14 }, (_, n) => n);
  return (
    <FullSvg>
      {marks.map((n) => {
        const y = Math.round(14 + n * STEP);
        return (
          <g key={n}>
            <path d={`M3 ${y + 0.5}H15`} stroke="#111" />
            {Array.from({ length: 9 }, (_, m) => (
              <path key={m} d={`M${m === 4 ? 10 : 12} ${Math.round(y + ((m + 1) * STEP) / 10) + 0.5}H15`} stroke="#111" />
            ))}
            <RulerText transform={`translate(11 ${y - 5}) rotate(-90)`}>{170 - n * 10} mm</RulerText>
          </g>
        );
      })}
    </FullSvg>
  );
}

/* ---------- tool palette ---------- */

const Palette = styled.aside`
  display: flex;
  flex-direction: column;
  flex: none;
  width: 247px;
  padding: 0 1px 0 4px;
  background: #cfdff8;
`;
const PaletteHead = styled.div`
  display: flex;
  align-items: center;
  flex: none;
  height: 27px;
  padding: 0 7px 0 4px;
  gap: 6px;
  background: linear-gradient(#dbe8fc, #8eb1ea);
`;
const PaletteTitle = styled.h2`
  flex: 1;
  margin: 0;
  font-size: 12px;
  font-weight: 400;
`;
const PaletteTools = styled.div`
  display: flex;
  flex: none;
  height: 32px;
  padding: 1px 2px 0;
  border-bottom: 1px solid #fff;
  background: linear-gradient(#d4e3fb, #8eb1ea);
`;
const PaletteMode = styled.div`
  display: flex;
  align-items: center;
  flex: none;
  height: 31px;
  padding: 2px 3px 0;
  gap: 3px;
  border-bottom: 2px solid #3f6cb4;
  background: #82a8e2;
`;
const ModeBox = styled.span`
  display: flex;
  width: 98px;
  height: 23px;
  background: #fff;
`;
const ModeSelect = styled.select`
  flex: 1;
  min-width: 0;
  padding-left: 3px;
  border: 0;
  background: none;
  appearance: none;
`;
const ModeMark = styled.span`
  display: flex;
  align-items: center;
  justify-content: center;
  width: 14px;
  margin: 1px;
  background: #86abe6;
`;
const PaletteBody = styled.div`
  display: flex;
  flex: 1;
  min-height: 0;
  overflow: hidden;
`;
const Groups = styled.div`
  flex: 1;
  padding: 3px 2px 0 1px;
  overflow: hidden;
  background: #c5d3e9;
`;
const GroupBox = styled.section`
  margin-bottom: 3px;
`;
const GroupHead = styled.div`
  display: flex;
  align-items: center;
  justify-content: space-between;
  height: 25px;
  padding: 0 5px 2px 13px;
  border-radius: 3px 3px 0 0;
  background: linear-gradient(to right, #fff, #f8f9fc 40%, #dee4ee);
`;
const GroupTitle = styled.h3`
  margin: 0;
  padding-top: 4px;
  font-family: "Open Sans", "Noto Sans", sans-serif;
  font-size: 13px;
  line-height: 18px;
  font-weight: 700;
  color: #2c6cb8;
  white-space: nowrap;
`;
const Fold = styled(PlainButton)`
  width: 16px;
  height: 16px;
  border: 1px solid #b4c0d4;
  border-radius: 8px;
  background: #fff;
`;
const GroupGrid = styled.div`
  display: grid;
  grid-template-columns: repeat(7, 28px);
  padding: 8px 11px;
  border: solid #fff;
  border-width: 0 1px;
  background: #f3f5fa;
`;
const TinyTool = styled(PlainButton)`
  height: 28px;
`;
const TabStrip = styled.div`
  display: flex;
  flex-direction: column;
  flex: none;
  gap: 14px;
  width: 28px;
  background: #f0f0f0;
`;
const SideTab = styled.button`
  display: flex;
  flex-direction: column;
  align-items: center;
  gap: 5px;
  width: 26px;
  padding: 4px 0 3px;
  border: 0;
  border-bottom: 2px solid #777;
  background: #f4f4f4;
`;
const SideTabText = styled.span`
  writing-mode: vertical-rl;
`;

const groups: [string, string][] = [
  ['Arbeitsebene', 'wpStar wpRays wpTarget wpAxes wpCone wpTwo wpBuild wpPick wpNodes wpFace wpMove wpBox wpBox2 wpDots wpGray wpDown'],
  [
    '3D-Objekt',
    'poly3d bell hook spiral mesh loop arc3 barrel sphere slash cubeBlue gem drum drum sphere wedge pyramid tiltBlue can sheetBlue sheetBlue cups arch tray lamp ribbon fork balls branch ring globe chair bracket screw',
  ],
  ['Boolesch & Facette', 'union subtract intersect slash solidUnion solidSub solidInt planeArrow dashBox dome domeLeft'],
  [
    '3D Ändern',
    'barrel union subtract intersect slash pencilDots pencilNodes pencilPlane split splitRed slotRed barrel planeArrow dashBox dome domeLeft dashBox house house cshape sweep pipe ubend plusArrow bendPipe foldArrow foldPlus cone sheets flow1 flow2 flow3 flow4 boxUp boxDiag boxT boxSlim boxSplit boxSlats panel panels wheel cabinet steps screw pin sail slabRed tableBlue notch slab stack circleSplit hourglass cshape tiltRed plus hatch',
  ],
  ['Volumenkörper/Oberfläche', ''],
];
const tiny = new Set(['barrel', 'sphere', 'drum', 'loop', 'gem', 'ribbon', 'fork', 'wpDots', 'tray', 'branch', 'plus', 'ring', 'globe', 'chair', 'bracket', 'balls']);

/* ---------- bottom bars ---------- */

const InspectorBar = styled.div`
  display: flex;
  align-items: center;
  flex: none;
  height: 46px;
  margin-right: 2px;
  padding: 2px 0 0 6px;
  border-bottom: 2px solid #4a6cb4;
  border-radius: 3px;
  ${barFill}
`;
const Fields = styled.div`
  display: flex;
  align-self: stretch;
  gap: 5px;
  padding: 3px 3px 0;
  background: #d7e5fb;
`;
const Field = styled.label`
  display: block;
  width: 66px;
  overflow: hidden;
  white-space: nowrap;
`;
const FieldLine = styled.span`
  display: flex;
  gap: 1px;
`;
const FieldInput = styled.input`
  flex: 1;
  min-width: 0;
  height: 20px;
  padding-left: 3px;
  border: 0;
  border-top: 1px solid #8aa2cc;
  border-left: 1px solid #8aa2cc;
  background: #d7e5fb;
  color: #7a8494;
`;
const Spin = styled.span`
  display: flex;
  flex-direction: column;
  width: 16px;
  gap: 1px;
`;
const SpinButton = styled(PlainButton)`
  flex: 1;
  border: 1px solid #d0d0d0;
  background: #f2f2f2;
`;
const Status = styled.footer`
  display: flex;
  align-items: center;
  flex: none;
  height: 27px;
  padding: 0 33px 0 8px;
  background: #d7e5fb;
`;
const StatusText = styled.span<{ $w?: number; $low?: boolean }>`
  width: ${(p) => (p.$w ? p.$w + 'px' : 'auto')};
  padding-bottom: ${(p) => (p.$low ? 0 : 3)}px;
  padding-top: ${(p) => (p.$low ? 4 : 0)}px;
`;
const Coord = styled.label<{ $off?: boolean }>`
  display: flex;
  align-items: center;
  gap: 2px;
  width: 107px;
  color: ${(p) => (p.$off ? '#555' : '#0a0a14')};
`;
const CoordMark = styled.span`
  display: flex;
  flex-direction: column;
  align-items: center;
  width: 10px;
  font-size: 10px;
  line-height: 12px;
`;
const CoordSquare = styled.span`
  width: 9px;
  height: 9px;
  border: 2px solid currentColor;
`;
const CoordInput = styled.input`
  width: 84px;
  height: 22px;
  padding-left: 4px;
  border: 1px solid #111;
  background: #fff;
  &:disabled {
    color: #909090;
  }
`;

const fieldList: [string, string, boolean][] = [
  ['Maßstab X', '1', true],
  ['Maßstab Y', '1', true],
  ['Maßstab Z', '1', true],
  ['Größe X', '0 mm', false],
  ['Größe Y', '0 mm', false],
  ['Größe Z', '0 mm', false],
  ['Pos X', '0 mm', false],
  ['Pos Y', '0 mm', false],
  ['Pos Z', '0 mm', false],
  ['Delta X', '0 mm', false],
  ['Delta Y', '0 mm', false],
  ['Delta Z', '0 mm', false],
  ['Drehg X', '0', true],
  ['Drehg Y', '0', true],
  ['Drehg Z', '0', true],
  ['Delta Abstand', '0 mm', false],
  ['Delta Winkel', '0', true],
];

const before = ['Datei', 'Bearbeiten', 'Ansicht', 'Einfügen', 'Format'];
const after = [
  'Zeichnen', 'Bemaßung', 'Zwangsbedingungen', 'Architektur', 'Ändern', 'Modi', 'SDK',
  'AddOns', 'Skripts', 'Optionen', 'Fenster', 'Hilfe',
];

export default function App() {
  return (
    <Page>
      <Global />
      <TitleBar>
        <Icon name="app" size={16} />
        <Title>TurboCAD 2021 Platinum 64-bit - [Zeichnung1 PlanModell]</Title>
        <WindowButtons $gap={25}>
          {['M1 5H11', 'M2 4h6v6H2zM4 4V2h6v6H8', 'M1 1l10 10M11 1L1 11'].map((d, n) => (
            <PlainButton key={n} aria-label={['Minimieren', 'Wiederherstellen', 'Schließen'][n]}>
              <Svg width="24" height="12" viewBox="-6 0 24 12">
                <path d={d} fill="none" stroke="#111" strokeWidth="1.2" />
              </Svg>
            </PlainButton>
          ))}
        </WindowButtons>
      </TitleBar>

      <MenuBar>
        <Grip />
        {before.map((t) => (
          <MenuTitle key={t}>{t}</MenuTitle>
        ))}
        <MenuSlot>
          <MenuTitle $open>Extras</MenuTitle>
          <Popup>
            <Entries items={extras} />
            <MoreButton aria-label="Mehr">
              <DownMark />
            </MoreButton>
          </Popup>
        </MenuSlot>
        {after.map((t) => (
          <MenuTitle key={t}>{t}</MenuTitle>
        ))}
        <Spacer />
        <WindowButtons $gap={6}>
          {['M1 9H7', 'M1 5h6v5H1zM3 5V2h6v5H7', 'M1 2l7 8M8 2L1 10'].map((d, n) => (
            <PlainButton key={n} aria-label={['Fenster minimieren', 'Fenster wiederherstellen', 'Fenster schließen'][n]}>
              <Svg width="10" height="12" viewBox="0 0 10 12">
                <path d={d} fill="none" stroke="#111" strokeWidth="2" />
              </Svg>
            </PlainButton>
          ))}
        </WindowButtons>
      </MenuBar>

      <BarRow>
        <Bar $after={80}>
          <BarGrip />
          <Tools list="new open save | print preview | cut~ copy~ paste brush | undo redo | copy paste | cut copy | paste open save print | copy paste | axesbox^ axesbox^ | props^ |" />
          <Combo w={301} label="Auswahl" />
          <Tools list="book^" />
        </Bar>
        <Bar>
          <BarGrip />
          <Tools list="cupYellow cupBlue cupGreen cupLine cupActive* egg" />
        </Bar>
      </BarRow>
      <BarRow>
        <Bar>
          <BarGrip />
          <Tools list="gear layers" />
          <Combo w={613} label="Layer" />
          <Combo w={98} label="Farbe" />
          <Combo w={98} label="Linienart" />
          <Divider />
          <Combo w={98} label="Stärke" />
          <Combo w={98} label="Muster" />
          <Tools list="pen cupActive*^" />
        </Bar>
      </BarRow>
      <BarRow>
        <Bar $after={20}>
          <BarGrip />
          <Tools list="camera" />
        </Bar>
        <Bar>
          <BarGrip />
          <Tools list="barrel~ | union~ subtract~ intersect~ slash~ | pencilDots pencilNodes pencilPlane | house~ house~ | union~ union~ | sweep~ sweep~ | house~ house~ house~ | house~ house~ house~ sweep~ pipe ubend plusArrow~ bendPipe~ foldArrow~ foldPlus~ cone~ | sheets~ flow1~ flow2~ flow3~ flow4~ | boxUp~ boxDiag~ boxT~ boxSlim~ boxSplit~ boxSlats~ panel~ panels~ wheel~ cabinet~ | steps~ | screw~ pin~ sail~ | slabRed tableBlue notch~ slab~ stack circleSplit~ hourglass~ | cshape~ tiltRed | plus~ hatch~" />
        </Bar>
      </BarRow>

      <Work>
        <SideDock>
          <SideBar>
            <SideGrip />
            <Tools
              flat
              list="arrow*^ nodeArrowDim line^ rect^ circle^ arc^ dot^ letterA^ coordLock^ copyBlue^ | poly3d^ sphere^ tiltBlue^ balls^ | move^ | slabDark^ gearCyan^ | blockWin^ blockSmall~^ arrowBlock~^ redBlue^ | starCircle^"
            />
          </SideBar>
        </SideDock>

        <Drawing>
          <Corner>
            <Icon name="origin" size={16} />
          </Corner>
          <RulerTop>
            <TopRuler />
          </RulerTop>
          <RulerLeft>
            <LeftRuler />
          </RulerLeft>
          <Canvas>
            <FullSvg>
              <ellipse cx="1325" cy="387" rx="115" ry="58" fill="#9acd32" />
              <rect x="1103" y="362" width="189" height="209" fill="#4e2e2f" />
              <rect x="967" y="264" width="194" height="188" fill="#000" />
              <g fill="none" strokeWidth="2">
                <path d="M28 735v15M30 731l4 4l4 -4M34 735v5" stroke="#1c8c2c" />
                <path d="M28 750h16M46 746l8 9M54 746l-8 9" stroke="#2828b8" />
                <path d="M30 746h9l-8 8h9" stroke="#b02020" />
              </g>
            </FullSvg>
          </Canvas>
          <ScrollV>
            <ScrollButton aria-label="Nach oben">
              <Chevron d="M1 7l4 -4l4 4" />
            </ScrollButton>
            <Track $size={239} />
            <Thumb $size={96} />
            <Track $size={411} />
            <ScrollButton aria-label="Nach unten">
              <Chevron d="M1 3l4 4l4 -4" />
            </ScrollButton>
          </ScrollV>
          <BottomStrip>
            <SheetTab $on>
              <Icon name="modelTab" size={14} />
              Modell
            </SheetTab>
            <SheetTab>
              <Icon name="paperTab" size={13} />
              Papier 1
            </SheetTab>
            <ScrollH>
              <ScrollButton aria-label="Nach links">
                <Chevron d="M7 1l-4 4l4 4" />
              </ScrollButton>
              <Track $size={620} />
              <Thumb $size={201} />
              <Track $size={502} />
              <ScrollButton aria-label="Nach rechts">
                <Chevron d="M3 1l4 4l-4 4" />
              </ScrollButton>
            </ScrollH>
          </BottomStrip>
        </Drawing>

        <Palette>
          <PaletteHead>
            <Grip />
            <PaletteTitle>Werkzeuge</PaletteTitle>
            <PlainButton aria-label="Anheften">
              <Chevron d="M3 1v5M7 1v5M3 1h4M1 6h8M5 6v4" s="#111" w={1} />
            </PlainButton>
            <PlainButton aria-label="Palette schließen">
              <Chevron d="M1 1l8 8M9 1l-8 8" s="#111" />
            </PlainButton>
          </PaletteHead>
          <PaletteTools>
            <Tools list="arrow* nodeArrow planeArrow~ ball" />
          </PaletteTools>
          <PaletteMode>
            <ModeBox>
              <ModeSelect aria-label="Werkzeugsatz">
                <option>3D-Modell</option>
              </ModeSelect>
              <ModeMark>
                <DownMark />
              </ModeMark>
            </ModeBox>
            <Tools list="figures^" />
          </PaletteMode>
          <PaletteBody>
            <Groups>
              {groups.map(([title, list]) => (
                <GroupBox key={title}>
                  <GroupHead>
                    <GroupTitle>{title}</GroupTitle>
                    <Fold aria-label={`${title} einklappen`}>
                      <Chevron d="M2 5l3 -3l3 3M2 9l3 -3l3 3" s="#1f4a98" w={1} />
                    </Fold>
                  </GroupHead>
                  {list && (
                    <GroupGrid>
                      {list.split(' ').map((n, k) => (
                        <TinyTool key={k} aria-label={n}>
                          <Icon name={n} size={tiny.has(n) ? 12 : 14} />
                        </TinyTool>
                      ))}
                    </GroupGrid>
                  )}
                </GroupBox>
              ))}
            </Groups>
            <ScrollV>
              <ScrollButton aria-label="Palette nach oben">
                <Chevron d="M1 7l4 -4l4 4" />
              </ScrollButton>
              <Thumb $size={634} />
              <Track $size={54} />
              <ScrollButton aria-label="Palette nach unten">
                <Chevron d="M1 3l4 4l4 -4" />
              </ScrollButton>
            </ScrollV>
          </PaletteBody>
        </Palette>

        <TabStrip>
          {[
            ['layerTab', 'Layer'],
            ['selectTab', 'Auswahlinformationen'],
            ['designTab', 'Entwurf'],
          ].map(([i, t]) => (
            <SideTab key={t}>
              <Icon name={i} size={20} />
              <SideTabText>{t}</SideTabText>
            </SideTab>
          ))}
        </TabStrip>

        <SideDock>
          <SideBar>
            <SideGrip />
            <Tools
              flat
              list="magnet~^ | parallel^ redArrow^ | copyRed^ boxOut~^ | order~^ dots~^ | table~^ rings~^ union~^ pencilDots^ barrel~^ house~^ sweep~^ flow4~^ screw~^ plus~^ boxUp~^ | target^ nodes^ | group~"
            />
          </SideBar>
        </SideDock>
      </Work>

      <InspectorBar>
        <BarGrip />
        <Tools list="wireWand cross sheet refresh |" />
        <Fields>
          {fieldList.map(([t, v, spin]) => (
            <Field key={t}>
              {t}
              <FieldLine>
                <FieldInput defaultValue={v} disabled />
                {spin && (
                  <Spin>
                    <SpinButton aria-label={`${t} erhöhen`}>
                      <UpMark $color="#555" />
                    </SpinButton>
                    <SpinButton aria-label={`${t} verringern`}>
                      <LowMark />
                    </SpinButton>
                  </Spin>
                )}
              </FieldLine>
            </Field>
          ))}
        </Fields>
        <Tools list="| boxPair boxSwap curveNode | tileGreen* tri1 tri2 tri3 | undoArrow bits cones press~ selRed frameGrid~ nodeCurve~ nodeMove~ planeDown~ planeUp~ lockBox~ polyBlue crossOut" />
      </InspectorBar>

      <Status>
        <StatusText>Wählen Sie ein oder mehrere Objekte aus</StatusText>
        <Spacer />
        <StatusText $w={41} $low>FANG</StatusText>
        <StatusText $w={44} $low>GEO</StatusText>
        {[
          ['X', '6,45 mm'],
          ['Y', '171,79 mm'],
          ['Z', '0 mm'],
        ].map(([t, v]) => (
          <Coord key={t} $off={t === 'Z'}>
            <CoordMark>
              <CoordSquare />
              {t}
            </CoordMark>
            <CoordInput defaultValue={v} disabled={t === 'Z'} />
          </Coord>
        ))}
        <StatusText $w={62}>153%</StatusText>
        <StatusText>22:31</StatusText>
      </Status>
    </Page>
  );
}
